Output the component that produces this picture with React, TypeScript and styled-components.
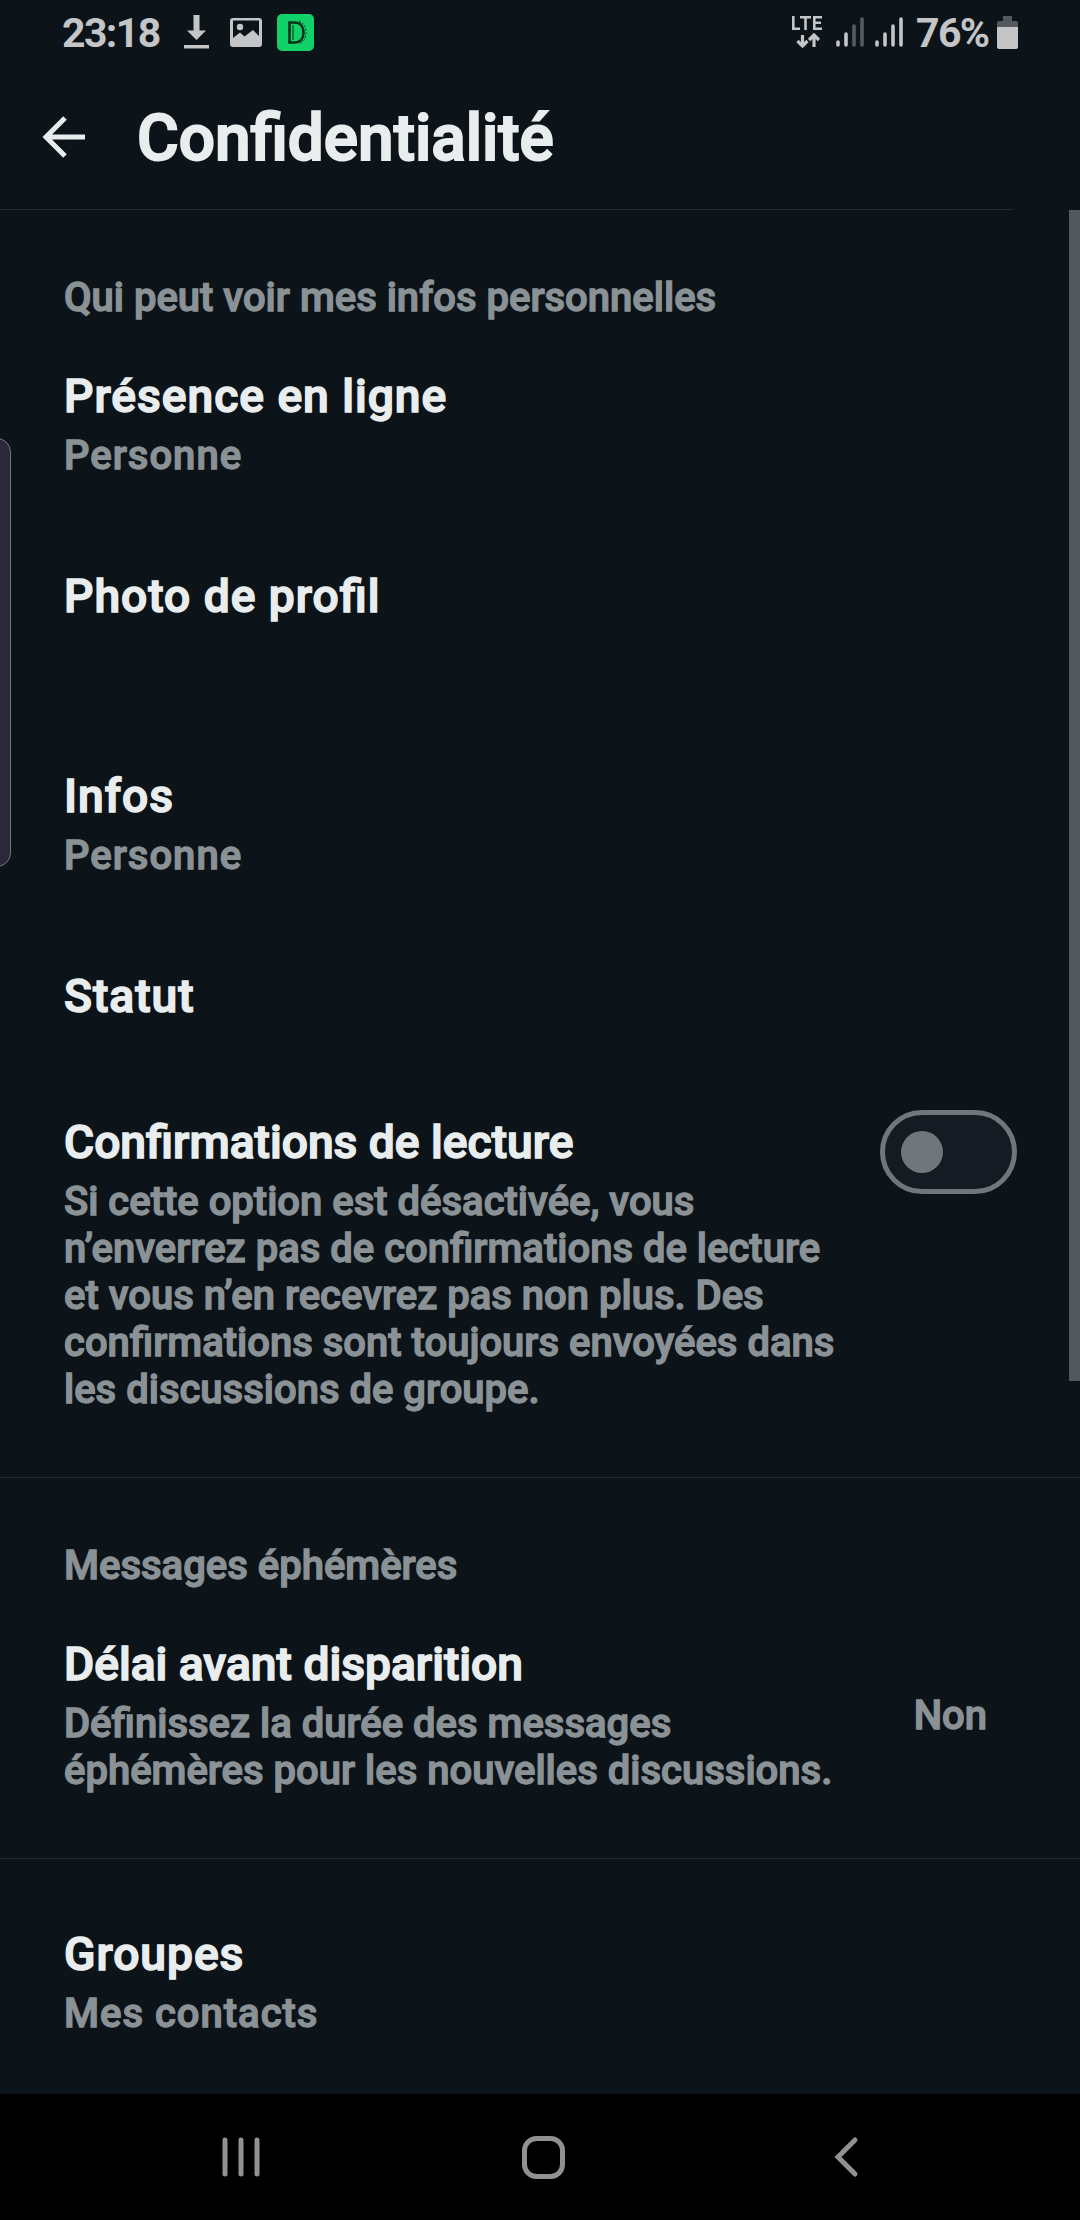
import React from 'react';
import styled, { createGlobalStyle } from 'styled-components';

const Global = createGlobalStyle`
  * { box-sizing: border-box; }
  html, body { margin: 0; background: #0c141a; }
  body { font-family: Roboto, "Noto Sans", sans-serif; }
`;

const Screen = styled.div`
  position: relative;
  display: flex;
  flex-direction: column;
  width: 1080px;
  height: 2220px;
  overflow: hidden;
  background: #0c141a;
  color: #e9edee;
`;

const StatusBar = styled.div`
  display: flex;
  flex: none;
  align-items: center;
  height: 64px;
  padding: 0 62px;
  color: #c4c5c7;
`;

const StatusText = styled.span<{ $width: number }>`
  width: ${p => p.$width}px;
  margin-top: 2px;
  font-size: 41px;
  line-height: 64px;
  font-weight: 700;
  letter-spacing: -1.6px;
  white-space: nowrap;
`;

const StatusIcon = styled.svg<{ $gap: number }>`
  display: block;
  flex: none;
  margin-left: ${p => p.$gap}px;
`;

const StatusGroup = styled.div`
  display: flex;
  align-items: center;
`;

const RightGroup = styled(StatusGroup)`
  margin-left: auto;
`;

const Battery = styled(StatusGroup)`
  margin-left: 13px;
`;

const Header = styled.header`
  display: flex;
  flex: none;
  align-items: center;
  width: 1013px;
  height: 146px;
  padding: 0 0 0 42px;
  border-bottom: 1px solid #262c33;
`;

const Title = styled.h1`
  margin: 4px 0 0 52px;
  font-size: 63.9px;
  line-height: 80px;
  font-weight: 500;
  -webkit-text-stroke: 2px currentColor;
`;

const Content = styled.main`
  flex: 1;
  display: flex;
  flex-direction: column;
`;

const Section = styled.section`
  display: flex;
  flex-direction: column;
  padding-bottom: 19px;
  border-bottom: 1px solid #232a31;
  &:last-child { padding: 23px 0 0; border-bottom: none; }
`;

const SectionTitle = styled.h2`
  margin: 0;
  padding: 64px 63px 3px 64px;
  font-size: 40px;
  line-height: 47px;
  font-weight: 500;
  -webkit-text-stroke: 1.3px currentColor;
  color: #8b9296;
`;

const Row = styled.div`
  display: flex;
  justify-content: space-between;
  padding: 44px 63px 45px 64px;
`;

const RowBody = styled.div`
  display: flex;
  flex-direction: column;
`;

const RowTitle = styled.div<{ $loose: boolean }>`
  height: 57px;
  font-size: 46.2px;
  line-height: 56px;
  font-weight: 500;
  letter-spacing: ${p => (p.$loose ? '0.021em' : 'normal')};
  -webkit-text-stroke: 1.5px currentColor;
  white-space: nowrap;
  font-feature-settings: "liga" 1;
`;

const RowText = styled.div`
  min-height: 47px;
  font-size: 40px;
  line-height: 47px;
  font-weight: 500;
  -webkit-text-stroke: 1.3px currentColor;
  color: #8b9296;
  white-space: pre;
`;

const RowDescription = styled(RowText)<{ $loose: boolean }>`
  margin-top: 7px;
  letter-spacing: ${p => (p.$loose ? '0.025em' : 'normal')};
`;

const RowValue = styled(RowText)`
  align-self: center;
  margin-right: 30px;
`;

const Switch = styled.div`
  display: flex;
  align-items: center;
  flex: none;
  width: 137px;
  height: 84px;
  margin-top: -4px;
  padding-left: 16px;
  border: 5px solid #6f777d;
  border-radius: 42px;
  background: #141b22;
`;

const Thumb = styled.div`
  width: 42px;
  height: 42px;
  border-radius: 50%;
  background: #6f777d;
`;

const NavBar = styled.nav`
  display: flex;
  flex: none;
  align-items: center;
  height: 126px;
  background: #000;
`;

const NavIcon = styled.svg<{ $gap: number }>`
  display: block;
  flex: none;
  margin-left: ${p => p.$gap}px;
  fill: none;
  stroke: #919191;
  stroke-width: 5px;
  stroke-linecap: round;
`;

const ScrollThumb = styled.div`
  position: absolute;
  top: 210px;
  right: 0;
  width: 11px;
  height: 1171px;
  background: #50575d;
`;

const EdgeHandle = styled.div`
  position: absolute;
  top: 438px;
  left: -20px;
  width: 31px;
  height: 429px;
  border: 1px solid #77777d;
  border-radius: 14px;
  background: #29293a;
`;

type Item = { title: string; text?: string; value?: string; toggle?: boolean };

const personal: Item[] = [
  { title: 'Présence en ligne', text: 'Personne' },
  { title: 'Photo de profil', text: '' },
  { title: 'Infos', text: 'Personne' },
  { title: 'Statut' },
  {
    title: 'Confirmations de lecture',
    text: 'Si cette option est désactivée, vous\nn’enverrez pas de confirmations de lecture\net vous n’en recevrez pas non plus. Des\nconfirmations sont toujours envoyées dans\nles discussions de groupe.',
    toggle: true,
  },
];

const Setting = ({ title, text, value, toggle }: Item) => {
  const loose = !value && !toggle;
  return (
    <Row>
      <RowBody>
        <RowTitle $loose={loose}>{title}</RowTitle>
        {text !== undefined && <RowDescription $loose={loose}>{text}</RowDescription>}
      </RowBody>
      {value && <RowValue>{value}</RowValue>}
      {toggle && <Switch role="switch" aria-checked={false}><Thumb /></Switch>}
    </Row>
  );
};

export default function App() {
  return (
    <Screen>
      <Global />
      <StatusBar>
        <StatusText $width={98}>23:18</StatusText>
        <StatusIcon $gap={24} width="25" height="34" viewBox="0 0 25 34" fill="currentColor">
          <path d="M9.500 0h6v15.500h6.500L12.500 25 3 15.500h6.500zM0 30h25v3.500H0z" />
        </StatusIcon>
        <StatusIcon $gap={21} width="32" height="29" viewBox="0 0 32 29">
          <path fill="currentColor" fillRule="evenodd" d="M3 0h26q3 0 3 3v23q0 3-3 3H3q-3 0-3-3V3q0-3 3-3zM3 2.500V20l7-5.500 4.500 4L23 12l6 6V2.500z" />
          <circle cx="10" cy="9" r="3.200" fill="currentColor" />
        </StatusIcon>
        <StatusIcon $gap={15} width="37" height="37" viewBox="0 0 37 37">
          <rect width="37" height="37" rx="5" fill="#12d169" />
          <path d="M12.500 8.500h5c6 0 9 4 9 10s-3 10-9 10h-5z" fill="none" stroke="#06301a" strokeWidth="2.600" />
          <path d="M16 11v15" fill="none" stroke="#06301a" />
          <path d="M22 7q7 3 7 11.500T22 30" fill="none" stroke="#0b301d" strokeDasharray="2 1.500" />
        </StatusIcon>
        <RightGroup>
          <StatusIcon $gap={0} width="31" height="34" viewBox="0 0 31 34" fill="none" stroke="currentColor">
            <path strokeWidth="2.600" d="M1.300 1v12.700H8M8 2.300h11M13.500 2.300V15M30 2.300h-7.700v11.400H30M22 7.800h7" />
            <path strokeWidth="3.200" d="M10.500 20v10M5.500 26l5 5 5-5M22 32V21M17 25l5-5 5 5" />
          </StatusIcon>
          <StatusIcon $gap={13} width="67" height="31" viewBox="0 0 67 31" stroke="currentColor" strokeWidth="3.600" strokeLinecap="round">
            <path d="M2 25v3M10 17v11M41 25v3M49 17v11M57 9v19M65 2v26" />
            <path opacity=".4" d="M18 9v19M26 2v26" />
          </StatusIcon>
          <Battery>
            <StatusText $width={73}>76%</StatusText>
            <StatusIcon $gap={8} width="21" height="33" viewBox="0 0 21 33">
              <path fill="#55595d" d="M6 0h9v5h4q2 0 2 2v4H0V7q0-2 2-2h4z" />
              <path fill="currentColor" d="M0 11h21v20q0 2-2 2H2q-2 0-2-2z" />
            </StatusIcon>
          </Battery>
        </RightGroup>
      </StatusBar>
      <Header>
        <svg width="43" height="42" viewBox="0 0 43 42" fill="none" stroke="currentColor" strokeWidth="5">
          <path d="M23 2 4 21l19 19M4 21h39" />
        </svg>
        <Title>Confidentialité</Title>
      </Header>
      <Content>
        <Section>
          <SectionTitle>Qui peut voir mes infos personnelles</SectionTitle>
          {personal.map(item => <Setting key={item.title} {...item} />)}
        </Section>
        <Section>
          <SectionTitle>Messages éphémères</SectionTitle>
          <Setting
            title="Délai avant disparition"
            text={'Définissez la durée des messages\néphémères pour les nouvelles discussions.'}
            value="Non"
          />
        </Section>
        <Section>
          <Setting title="Groupes" text="Mes contacts" />
        </Section>
      </Content>
      <NavBar>
        <NavIcon $gap={221} width="40" height="42" viewBox="0 0 40 42">
          <path d="M4 4v34M20 4v34M36 4v34" />
        </NavIcon>
        <NavIcon $gap={261} width="43" height="43" viewBox="0 0 43 43">
          <rect x="2.500" y="2.500" width="38" height="38" rx="12" />
        </NavIcon>
        <NavIcon $gap={268} width="26" height="42" viewBox="0 0 26 42">
          <path d="M22 4 5 21l17 17" />
        </NavIcon>
      </NavBar>
      <ScrollThumb />
      <EdgeHandle />
    </Screen>
  );
}
